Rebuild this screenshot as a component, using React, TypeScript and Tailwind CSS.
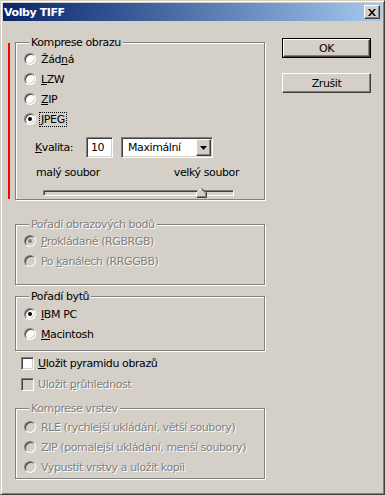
import React from 'react'

const FONT = "font-['DejaVu_Sans',sans-serif] text-[11px] leading-[13px] tracking-[-0.4px]"
const SUNKEN = 'border border-t-[#808080] border-l-[#808080] border-r-white border-b-white shadow-[inset_1px_1px_0_#404040,inset_-1px_-1px_0_#d4d0c8]'
const RAISED = 'border border-t-white border-l-white border-r-[#404040] border-b-[#404040] shadow-[inset_-1px_-1px_0_#808080]'
const DIS = 'text-[#808080] [text-shadow:1px_1px_0_#fff]'

function Radio({ checked, disabled }: { checked?: boolean; disabled?: boolean }) {
  return (
    <span
      className={`flex h-3 w-3 shrink-0 items-center justify-center rounded-full border border-t-[#808080] border-l-[#808080] border-r-white border-b-white shadow-[inset_1px_1px_0_#404040,inset_-1px_-1px_0_#d4d0c8] ${
        disabled ? 'bg-[#d4d0c8]' : 'bg-white'
      }`}
    >
      {checked && <span className={`h-1 w-1 rounded-full ${disabled ? 'bg-[#808080]' : 'bg-black'}`} />}
    </span>
  )
}

function RadioRow({ children, checked, disabled, focus }: { children: React.ReactNode; checked?: boolean; disabled?: boolean; focus?: boolean }) {
  return (
    <div className="flex h-[20px] items-center pl-[8px]">
      <Radio checked={checked} disabled={disabled} />
      <span className={`ml-[4px] px-[1px] ${disabled ? DIS : 'text-black'} ${focus ? 'outline outline-1 outline-dotted outline-black' : ''}`}>
        {children}
      </span>
    </div>
  )
}

function Group({ title, disabled, children, className }: { title: string; disabled?: boolean; children: React.ReactNode; className?: string }) {
  return (
    <div className={`relative w-[250px] border border-[#808080] shadow-[inset_1px_1px_0_#fff,1px_1px_0_#fff] ${className ?? ''}`}>
      <span className={`absolute left-[13px] top-[-7px] bg-[#d4d0c8] px-[2px] ${disabled ? DIS : 'text-black'}`}>{title}</span>
      {children}
    </div>
  )
}

function Check({ children, disabled }: { children: React.ReactNode; disabled?: boolean }) {
  return (
    <div className="flex h-[21px] items-center pl-[6px]">
      <span className={`h-[13px] w-[13px] shrink-0 ${SUNKEN} ${disabled ? 'bg-[#d4d0c8]' : 'bg-white'}`} />
      <span className={`ml-[4px] ${disabled ? DIS : 'text-black'}`}>{children}</span>
    </div>
  )
}

export default function App() {
  return (
    <div
      className={`flex h-[495px] w-[385px] flex-col border border-t-[#d4d0c8] border-l-[#d4d0c8] border-r-[#404040] border-b-[#404040] bg-[#d4d0c8] p-[2px] shadow-[inset_1px_1px_0_#fff,inset_-1px_-1px_0_#808080] ${FONT}`}
    >
      {/* title bar */}
      <div className="flex h-[18px] items-center justify-between bg-gradient-to-r from-[#0a246a] to-[#a6caf0] pl-[1px] pr-[2px]">
        <span className="text-[11px] font-bold tracking-[-0.4px] text-white">Volby TIFF</span>
        <span className={`flex h-[14px] w-[16px] items-center justify-center bg-[#d4d0c8] ${RAISED}`}>
          <svg width="8" height="7" viewBox="0 0 8 7">
            <path d="M0 0h2l2 2.5L6 0h2L5 3.5 8 7H6L4 4.5 2 7H0l3-3.5z" fill="#000" />
          </svg>
        </span>
      </div>

      <div className="flex items-start pl-[12px]">
        {/* left column */}
        <div className="mt-[21px] flex flex-col">
          <Group title="Komprese obrazu" className="h-[158px] pt-[6px]">
            <span className="absolute left-[-8px] top-0 bottom-0 w-[2px] bg-[#ff0000]" />
            <RadioRow>
              Žád<u>n</u>á
            </RadioRow>
            <RadioRow>
              <u>L</u>ZW
            </RadioRow>
            <RadioRow>
              <u>Z</u>IP
            </RadioRow>
            <RadioRow checked focus>
              <u>J</u>PEG
            </RadioRow>
            <div className="mt-[8px] flex h-[21px] items-center pl-[19px]">
              <span className="w-[51px]">
                <u>K</u>valita:
              </span>
              <span className={`flex h-[21px] w-[27px] items-center bg-white pl-[4px] ${SUNKEN}`}>10</span>
              <span className={`ml-[8px] flex h-[21px] w-[92px] items-center justify-between bg-white pl-[6px] pr-[1px] ${SUNKEN}`}>
                <span>Maximální</span>
                <span className={`flex h-[17px] w-[15px] items-center justify-center bg-[#d4d0c8] ${RAISED}`}>
                  <svg width="7" height="4" viewBox="0 0 7 4">
                    <path d="M0 0h7L3.5 4z" fill="#000" />
                  </svg>
                </span>
              </span>
            </div>
            <div className="mt-[8px] flex w-[223px] justify-between pl-[20px] leading-[14px]">
              <span>malý soubor</span>
              <span>velký soubor</span>
            </div>
            <div className="relative ml-[27px] mt-[6px] h-[12px] w-[191px]">
              <div className={`absolute left-0 right-0 top-[4px] h-[6px] bg-[#d4d0c8] ${SUNKEN}`} />
              <svg className="absolute left-[153px] top-[2px]" width="11" height="10" viewBox="0 0 11 10">
                <path d="M0.5 9.5V4.5L5.5 0.5 10.5 4.5V9.5z" fill="#d4d0c8" />
                <path d="M0.5 9.5V4.5L5.5 0.5" fill="none" stroke="#fff" />
                <path d="M5.5 0.5L10.5 4.5V9.5H0.5" fill="none" stroke="#404040" />
                <path d="M5.5 1.8L9.5 5V8.5H1.5" fill="none" stroke="#808080" />
              </svg>
            </div>
          </Group>

          <Group title="Pořadí obrazových bodů" disabled className="mt-[24px] h-[61px] pt-[6px]">
            <RadioRow checked disabled>
              <u>P</u>rokládané (RGBRGB)
            </RadioRow>
            <RadioRow disabled>
              Po <u>k</u>análech (RRGGBB)
            </RadioRow>
          </Group>

          <Group title="Pořadí bytů" className="mt-[11px] h-[55px] pt-[7px]">
            <RadioRow checked>
              <u>I</u>BM PC
            </RadioRow>
            <RadioRow>
              <u>M</u>acintosh
            </RadioRow>
          </Group>

          <div className="mt-[2px] flex flex-col">
            <Check>
              <u>U</u>ložit pyramidu obrazů
            </Check>
            <Check disabled>
              Uložit <u>p</u>růhlednost
            </Check>
          </div>

          <Group title="Komprese vrstev" disabled className="mt-[13px] h-[71px] pt-[8px]">
            <RadioRow disabled>RLE (rychlejší ukládání, větší soubory)</RadioRow>
            <RadioRow disabled>ZIP (pomalejší ukládání, menší soubory)</RadioRow>
            <RadioRow disabled>Vypustit vrstvy a uložit kopii</RadioRow>
          </Group>
        </div>

        {/* right column */}
        <div className="ml-[17px] mt-[17px] flex flex-col gap-[15px]">
          <div className="border border-black">
            <div className={`flex h-[18px] w-[87px] items-center justify-center bg-[#d4d0c8] ${RAISED}`}>OK</div>
          </div>
          <div className={`flex h-[20px] w-[89px] items-center justify-center bg-[#d4d0c8] ${RAISED}`}>Zrušit</div>
        </div>
      </div>
    </div>
  )
}
